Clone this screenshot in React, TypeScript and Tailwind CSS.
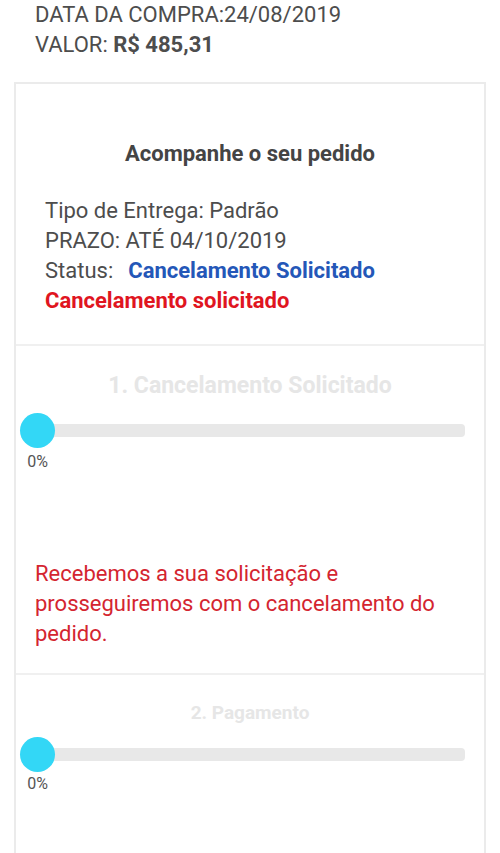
const Progress = ({ title, titleClass, labelClass }: { title: string; titleClass: string; labelClass: string }) => (
  <div>
    <div className={`text-center font-bold text-[#e6e6e6] ${titleClass}`}>{title}</div>
    <div className="flex items-center pl-[4px] pr-[19px]">
      <div className="w-[35px] h-[35px] rounded-full bg-[#33d7f6] shrink-0 relative z-10" />
      <div className="flex-1 h-[13px] -ml-[18px] rounded-[4px] bg-[#e8e8e8]" />
    </div>
    <div className={`w-[35px] ml-[4px] text-center text-[16px] leading-[24px] text-[#555] ${labelClass}`}>0%</div>
  </div>
)

export default function App() {
  return (
    <div className="w-[500px] h-[853px] overflow-hidden bg-white font-['Roboto',sans-serif]">
      <div className="px-[35px] text-[22px] leading-[30px] text-[#4d4d4d]">
        <div>DATA DA COMPRA:24/08/2019</div>
        <div>
          VALOR: <span className="font-bold">R$ 485,31</span>
        </div>
      </div>

      <div className="mx-[14px] mt-[22px] border-2 border-[#ebebeb]">
        <div className="pt-[55px] pb-[28px] border-b-2 border-[#f0f0f0]">
          <div className="text-center text-[22px] leading-[30px] font-bold text-[#444]">
            Acompanhe o seu pedido
          </div>
          <div className="mt-[27px] pl-[29px] text-[22px] leading-[30px] text-[#4d4d4d]">
            <div>Tipo de Entrega: Padrão</div>
            <div>PRAZO: ATÉ 04/10/2019</div>
            <div className="flex">
              <span>Status:</span>
              <span className="ml-[15px] font-bold text-[#2457b8]">Cancelamento Solicitado</span>
            </div>
            <div className="font-bold text-[#e0151f]">Cancelamento solicitado</div>
          </div>
        </div>

        <div className="pt-[25px] pb-[24px] border-b-2 border-[#f0f0f0]">
          <Progress
            title="1. Cancelamento Solicitado"
            titleClass="text-[23px] leading-[30px] mb-[12px]"
            labelClass="mt-[2px]"
          />
          <div className="mt-[85px] pl-[19px] pr-[20px] text-[22px] leading-[30px] text-[#d42530]">
            Recebemos a sua solicitação e prosseguiremos com o cancelamento do pedido.
          </div>
        </div>

        <div className="pt-[24px] pb-[60px]">
          <Progress
            title="2. Pagamento"
            titleClass="text-[19px] leading-[28px] mb-[10px]"
            labelClass="mt-0"
          />
        </div>
      </div>
    </div>
  )
}
